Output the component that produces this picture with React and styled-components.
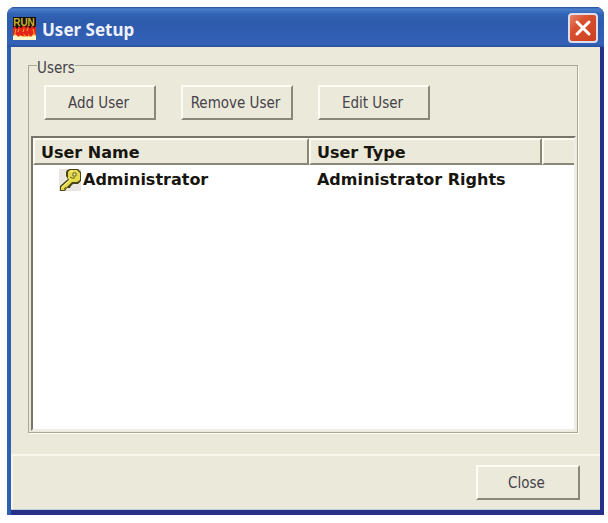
import React from 'react';
import styled, { createGlobalStyle, ThemeProvider } from 'styled-components';

const theme = {
  colors: {
    face: '#ebe9d9',
    light: '#fdfcf2',
    shadow: '#8a8776',
    line: '#aaa899',
    text: '#45424a',
    strong: '#17150f',
  },
};

const GlobalStyle = createGlobalStyle`
  * {
    box-sizing: border-box;
  }
  body {
    margin: 0;
    padding: 7px 4px 8px 7px;
    background: #fff;
    font-family: 'DejaVu Sans Condensed', 'DejaVu Sans', sans-serif;
    font-size: 15px;
  }
`;

const Dialog = styled.main`
  padding: 0 4px 5px;
  border-radius: 8px 8px 0 0;
  background: linear-gradient(90deg, #2f5fb0 4px, #28308a 4px);
`;

const TitleBar = styled.header`
  display: flex;
  align-items: center;
  gap: 6px;
  height: 40px;
  margin: 0 -4px;
  padding: 2px 6px 0;
  border-radius: 8px 8px 0 0;
  background: linear-gradient(
    #234a92,
    #4a80cc 2px,
    #3262b4 7px,
    #2d5aab 16px,
    #315fb3 30px,
    #3261b6 37px,
    #294f9e
  );
`;

const Title = styled.h1`
  flex: 1;
  margin: 0;
  padding-top: 4px;
  color: #eef1fc;
  font-family: 'Noto Sans', sans-serif;
  font-size: 17px;
  font-weight: 700;
  line-height: 24px;
`;

const CloseIconButton = styled.button`
  display: flex;
  align-items: center;
  justify-content: center;
  width: 30px;
  height: 30px;
  padding: 0;
  border: 2px solid #dfdcec;
  border-radius: 4px;
  background: linear-gradient(135deg, #e78468, #d9512f 35%, #cc3f20);
`;

const Content = styled.div`
  border-bottom: 1px solid #b9d3d2;
  background: ${(props) => props.theme.colors.face};
`;

const Body = styled.div`
  padding: 9px 22px 21px 17px;
`;

const Group = styled.fieldset`
  min-width: 0;
  margin: 0;
  padding: 0 1px 1px 2px;
  border: 1px solid ${(props) => props.theme.colors.line};
  box-shadow: 1px 1px 0 ${(props) => props.theme.colors.light};
`;

const Legend = styled.legend`
  margin-left: 6px;
  padding: 6px 0 0;
  color: ${(props) => props.theme.colors.text};
  line-height: 12px;
`;

const Toolbar = styled.div`
  display: flex;
  gap: 25px;
  padding: 11px 13px 16px;
`;

const Button = styled.button`
  width: ${(props) => props.$width || '112px'};
  height: 35px;
  padding: 0 3px 0 0;
  border: 2px solid;
  border-color: ${({ theme: { colors } }) =>
    `${colors.light} ${colors.shadow} ${colors.shadow} ${colors.light}`};
  background: ${(props) => props.theme.colors.face};
  color: ${(props) => props.theme.colors.text};
  font: inherit;
`;

const ListView = styled.div`
  min-height: 295px;
  border: 2px solid;
  border-color: #77756a #efeee6 #efeee6 #77756a;
  background: #fff;
`;

const Table = styled.table`
  width: 100%;
  border-collapse: separate;
  border-spacing: 0;
  table-layout: fixed;
  color: ${(props) => props.theme.colors.strong};
  font-family: 'DejaVu Sans', sans-serif;
  font-size: 16px;
  font-weight: 700;
  text-align: left;
`;

const Column = styled.col`
  width: ${(props) => props.$width};
`;

const HeaderCell = styled.th`
  height: 27px;
  padding: 3px 6px 0;
  border: 2px solid;
  border-color: ${({ theme: { colors } }) =>
    `${colors.light} ${colors.shadow} ${colors.shadow} ${colors.light}`};
  border-right-width: ${(props) => (props.$last ? 0 : '2px')};
  background: ${(props) => props.theme.colors.face};
  line-height: 20px;
`;

const Cell = styled.td`
  height: 30px;
  padding: 0 0 0 8px;
  line-height: 24px;
  white-space: nowrap;
`;

const UserName = styled.span`
  display: flex;
  align-items: center;
  gap: 2px;
  padding-left: 18px;
`;

const Footer = styled.footer`
  display: flex;
  justify-content: flex-end;
  padding: 9px 20px 9px 0;
  border: 2px solid #f8f7ec;
  border-right: 0;
  border-bottom: 0;
`;

const AppIcon = () => (
  <svg width="23" height="23" viewBox="0 0 23 23" aria-hidden="true">
    <rect width="23" height="23" fill="#160f0c" />
    <path
      d="M0 22V11l2-2 2 3 2-3 2 2 3-3 2 3 2-3 2 4 2-4 2 3 2-2v13z"
      fill="#e5281a"
    />
    <path
      d="M0 19l2-3 2 3 2-2 2 2 3-2 2 2 3-3 2 3 3-3 2 2v5H0z"
      fill="#f89a28"
    />
    <path d="M0 23v-4l3-1 2 2 3-1 3 1 4-1 3 1 3-2 2 1v4z" fill="#fff6c8" />
    <path
      d="M5 19l3-6 2 6M12 13v3l3 3M18 12l-2 4 2 3"
      stroke="#e42219"
      fill="none"
      strokeWidth="2"
    />
    <path d="M3 12l-1 4M6 12l-1 3M11 12l-1 3M15 11l-1 3M20 12l1 4" stroke="#f8a52c" fill="none" />
    <text
      x="11"
      y="9"
      textAnchor="middle"
      fill="#c9b32c"
      fontFamily="Liberation Sans, sans-serif"
      fontSize="10"
      fontWeight="700"
    >
      RUN
    </text>
  </svg>
);

const CrossIcon = () => (
  <svg width="18" height="18" viewBox="0 0 18 18" aria-hidden="true">
    <path d="M3 3l12 12M15 3L3 15" stroke="#fff" strokeWidth="3" strokeLinecap="round" />
  </svg>
);

const KeyIcon = () => (
  <svg width="22" height="22" viewBox="0 0 22 22" aria-hidden="true">
    <rect width="22" height="22" fill="#e9e5e1" />
    <path
      d="M8 1l3-1h8l3 3v9l-3 3h-5l-2 2-1 2H8l-2 3H1v-5l8-7-2-3V3z"
      fill="#4a4516"
    />
    <path d="M9 3l2-2h7l3 3v7l-3 2h-5l-8 8H2v-3l8-7-1-2z" fill="#e5da4c" />
    <path d="M3 18l8-7M11 3l3-1" stroke="#faf6a0" fill="none" />
    <path d="M14 4h3v3h-3z" stroke="#67601c" fill="#fff9bd" />
    <path d="M11 8l2 1h3M5 20l2-2" stroke="#67601c" fill="none" />
  </svg>
);

const App = () => {
  return (
    <ThemeProvider theme={theme}>
      <GlobalStyle />
      <Dialog>
        <TitleBar>
          <AppIcon />
          <Title>User Setup</Title>
          <CloseIconButton type="button" aria-label="Close window">
            <CrossIcon />
          </CloseIconButton>
        </TitleBar>
        <Content>
          <Body>
            <Group>
              <Legend>Users</Legend>
              <Toolbar>
                <Button type="button">Add User</Button>
                <Button type="button">Remove User</Button>
                <Button type="button">Edit User</Button>
              </Toolbar>
              <ListView>
                <Table>
                  <colgroup>
                    <Column $width="51%" />
                    <Column $width="43%" />
                    <Column $width="6%" />
                  </colgroup>
                  <thead>
                    <tr>
                      <HeaderCell scope="col">User Name</HeaderCell>
                      <HeaderCell scope="col">User Type</HeaderCell>
                      <HeaderCell as="td" $last />
                    </tr>
                  </thead>
                  <tbody>
                    <tr>
                      <Cell>
                        <UserName>
                          <KeyIcon />
                          Administrator
                        </UserName>
                      </Cell>
                      <Cell>Administrator Rights</Cell>
                      <Cell />
                    </tr>
                  </tbody>
                </Table>
              </ListView>
            </Group>
          </Body>
          <Footer>
            <Button type="button" $width="104px">
              Close
            </Button>
          </Footer>
        </Content>
      </Dialog>
    </ThemeProvider>
  );
};

export default App;
